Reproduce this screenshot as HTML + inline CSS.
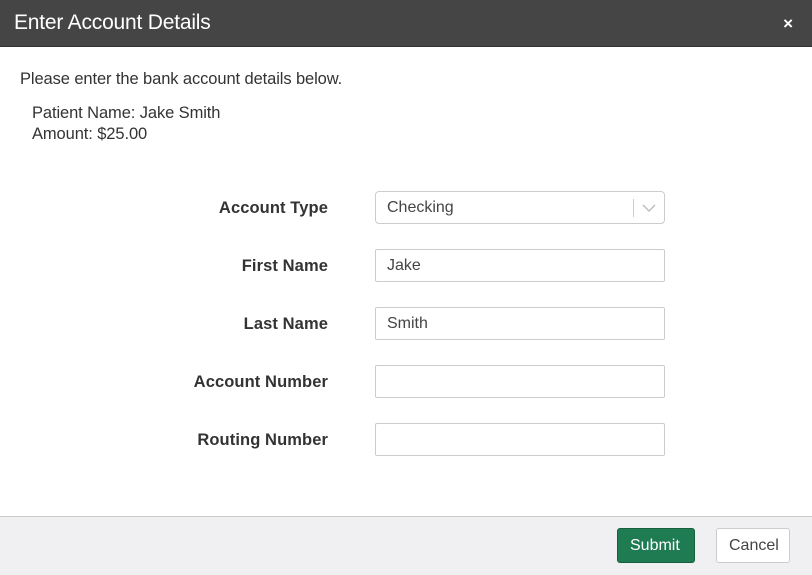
<!DOCTYPE html>
<html><head><style>
body{margin:0;width:812px;height:574px;overflow:hidden;background:#fff;font-family:"Liberation Sans",sans-serif;position:relative}
.hdr{position:absolute;left:0;top:0;width:812px;height:46px;background:#454545;border-bottom:1px solid #333}
.hdr .t{position:absolute;left:14px;top:11px;color:#fff;font-size:21px;letter-spacing:-0.2px}
.hdr .x{position:absolute;right:19px;top:14px;color:#fff;font-size:17px;font-weight:bold}
.txt{position:absolute;color:#333;font-size:16.5px;letter-spacing:-0.1px}
.lbl{position:absolute;right:484px;color:#333;font-size:16.5px;font-weight:bold;letter-spacing:0.1px}
.in{position:absolute;left:375px;width:290px;height:33px;border:1px solid #ccc;border-radius:2px;box-sizing:border-box;font-size:16px;color:#444;padding:7px 11px}
.ft{position:absolute;left:0;top:516px;width:812px;height:58px;background:#f0f0f2;border-top:1px solid #ccc}
.btn{position:absolute;top:528px;height:35px;box-sizing:border-box;font-size:16px;border-radius:3px;padding:8px 12px}
</style></head><body>
<div class="hdr"><div class="t">Enter Account Details</div><div class="x">×</div></div>
<div class="txt" style="left:20px;top:70px">Please enter the bank account details below.</div>
<div class="txt" style="left:32px;top:104px">Patient Name: Jake Smith</div>
<div class="txt" style="left:32px;top:125px">Amount: $25.00</div>
<div class="lbl" style="top:199px">Account Type</div>
<div class="in" style="top:191px;border-radius:4px">Checking<span style="position:absolute;right:30px;top:7px;width:1px;height:18px;background:#ccc"></span><svg style="position:absolute;right:8px;top:12px" width="14" height="9" viewBox="0 0 14 9"><path d="M1 1l6 6 6-6" fill="none" stroke="#bbb" stroke-width="1.4"/></svg></div>
<div class="lbl" style="top:257px">First Name</div>
<div class="in" style="top:249px">Jake</div>
<div class="lbl" style="top:315px">Last Name</div>
<div class="in" style="top:307px">Smith</div>
<div class="lbl" style="top:373px">Account Number</div>
<div class="in" style="top:365px"></div>
<div class="lbl" style="top:431px">Routing Number</div>
<div class="in" style="top:423px"></div>
<div class="ft"></div>
<div class="btn" style="left:617px;width:78px;background:#1e7b52;color:#fff;border:1px solid #16603f">Submit</div>
<div class="btn" style="left:716px;width:74px;background:#fff;color:#444;border:1px solid #ccc">Cancel</div>
</body></html>
